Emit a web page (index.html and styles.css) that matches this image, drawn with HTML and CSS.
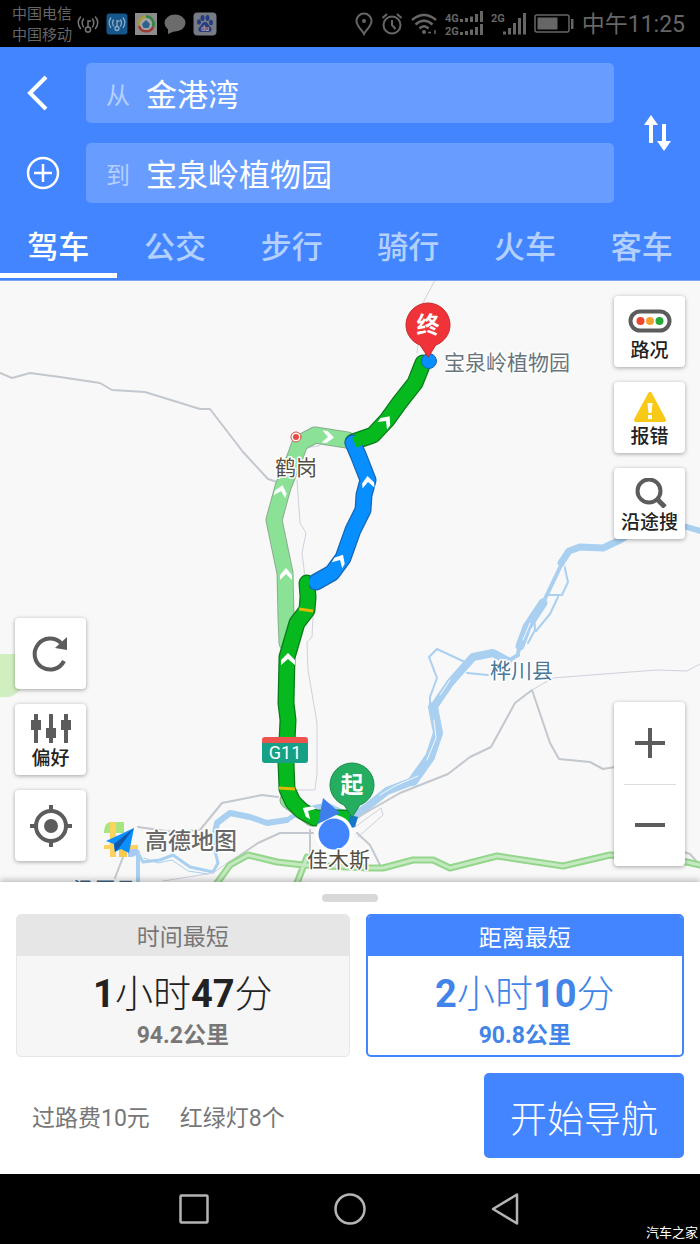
FILE: index.html
```html
<!DOCTYPE html>
<html lang="zh-CN">
<head>
<meta charset="utf-8">
<meta name="viewport" content="width=device-width, initial-scale=1">
<title>路线规划</title>
<link rel="stylesheet" href="styles.css">
</head>
<body>
<div class="status">
  <div class="carriers"><span>中国电信</span><span>中国移动</span></div>
  <div class="notices">
    <svg width="22" height="22" viewBox="0 0 22 22" fill="none" stroke="#777" stroke-width="1.5" stroke-linecap="round"><circle cx="11" cy="16.5" r="2.6"/><path d="M11 14V8h2.5M6.5 14Q4 9.5 6.5 6M15.5 14Q18 9.5 15.5 6M3.5 15.5Q-1 9.5 3.5 4M18.5 15.5Q23 9.5 18.5 4"/></svg>
    <svg width="22" height="22" viewBox="0 0 22 22" fill="none" stroke="#8cabc4" stroke-width="1.3" stroke-linecap="round"><rect x=".5" y=".5" width="21" height="21" rx="3" fill="#17568a" stroke="none"/><circle cx="11" cy="15.5" r="2"/><path d="M11 13.5V8h2M7.5 13Q5.5 9.5 7.5 7M14.5 13Q16.5 9.5 14.5 7M4.8 14.5Q1.5 9.5 4.8 5M17.2 14.5Q20.5 9.5 17.2 5"/></svg>
    <svg width="22" height="22" viewBox="0 0 22 22" fill="none" stroke-width="2.5"><path d="M0 0h22v22H0z" fill="#8c8c8c"/><circle cx="11" cy="11" r="8" fill="#a4a4a4"/><path d="M4 13A7.5 7.5 0 0 1 11 3.5" stroke="#a39a3a"/><path d="M11 3.5A7.5 7.5 0 0 1 18 14" stroke="#318246"/><path d="M18 14A7.5 7.5 0 0 1 4 13" stroke="#9b3b32"/><path d="M11 7l4 4-1.5 4h-5L7 11z" fill="#2d6388"/></svg>
    <svg width="22" height="22" viewBox="0 0 22 22"><ellipse cx="11" cy="10" rx="10.5" ry="8.5" fill="#6c6c6c"/><path d="M4 15v6l7-3z" fill="#6c6c6c"/></svg>
    <svg width="24" height="24" viewBox="0 0 24 24"><rect x=".5" y=".5" width="23" height="23" rx="4" fill="#777b84"/><g fill="#253b83"><ellipse cx="6" cy="10" rx="2" ry="2.7"/><ellipse cx="9.5" cy="6" rx="2" ry="3"/><ellipse cx="14.5" cy="6" rx="2" ry="3"/><ellipse cx="18" cy="10.5" rx="2" ry="2.7"/><path d="M12 10c3 0 3 3 5.500 5 2 2 1 5-1.500 5H8c-2.500 0-3.500-3-1.500-5C9 13 9 10 12 10z"/></g><text x="12" y="18.5" font-size="7" font-weight="700" fill="#aaa" text-anchor="middle">du</text></svg>
  </div>
  <div class="device">
    <svg width="18" height="24" viewBox="0 0 18 24" fill="none" stroke="#666" stroke-width="2"><path d="M9 22C7 18 1.500 14 1.500 9a7.500 7.500 0 0 1 15 0c0 5-5.500 9-7.500 13z"/><circle cx="9" cy="9" r="2" fill="#666" stroke="none"/></svg>
    <svg width="22" height="24" viewBox="0 0 22 24" fill="none" stroke="#666" stroke-width="2"><circle cx="11" cy="13" r="8.5"/><path d="M11 8v5l3.500 4M1.500 6L6 2M20.500 6L16 2"/></svg>
    <svg width="26" height="24" viewBox="0 0 26 24" fill="none" stroke="#666" stroke-width="2.5"><path d="M1 8Q13-2 25 8M4.500 12.500Q13 5 21.500 12.500M8.500 16.500Q13 12 17.500 16.500"/><circle cx="13" cy="20" r="2" fill="#666" stroke="none"/><path d="M17 20.500h3M24 18v4" stroke-width="1.5"/></svg>
    <svg width="38" height="26" viewBox="0 0 38 26" fill="#666"><text x="0" y="11" font-size="11" font-weight="700">4G</text><text x="0" y="24" font-size="11" font-weight="700">2G</text><path d="M15 8h3v3h-3zM20 7h3v4h-3zM25 5.500h3V11h-3zM30 3h3v8h-3zM35 0h3v11h-3zM15 21h3v3h-3zM20 20h3v4h-3zM25 18.500h3V24h-3zM30 16h3v8h-3zM35 13h3v11h-3z"/></svg>
    <svg width="35" height="26" viewBox="0 0 35 26" fill="#666"><text x="0" y="11" font-size="11" font-weight="700">2G</text><path d="M12 20.500h3v3h-3zM17 17h3v6.500h-3zM22 12h3v11.500h-3zM27 7h3v16.500h-3zM32 2h3v21.500h-3z"/></svg>
    <svg width="40" height="20" viewBox="0 0 40 20"><rect x="1" y="1" width="34" height="17" rx="2" fill="none" stroke="#666" stroke-width="1.5"/><path d="M3.500 3.500h20v12h-20zM37 5h2.500v10H37z" fill="#666"/></svg>
    <time>中午11:25</time>
  </div>
</div>

<header class="planner">
  <form class="route-form">
    <div class="side">
      <button type="button" class="icon-btn" aria-label="返回"><svg width="34" height="40" viewBox="0 0 34 40" fill="none" stroke="#fff" stroke-width="4"><path d="M20 4L4 20l16 16"/></svg></button>
      <button type="button" class="icon-btn" aria-label="添加途经点"><svg width="34" height="34" viewBox="0 0 34 34" fill="none" stroke="#fff" stroke-width="2.5"><circle cx="17" cy="17" r="15"/><path d="M8 17h18M17 8v18"/></svg></button>
    </div>
    <div class="fields">
      <div class="field"><label for="from">从</label><input id="from" type="text" value="金港湾"></div>
      <div class="field"><label for="to">到</label><input id="to" type="text" value="宝泉岭植物园"></div>
    </div>
    <button type="button" class="icon-btn" aria-label="交换起终点"><svg width="28" height="38" viewBox="0 0 28 38" fill="#fff"><path d="M8 1l7 10h-5v18H6V11H1zM21 37l-7-10h5V10h4v17h5z"/></svg></button>
  </form>
  <nav class="tabs">
    <button type="button" class="tab active">驾车</button>
    <button type="button" class="tab">公交</button>
    <button type="button" class="tab">步行</button>
    <button type="button" class="tab">骑行</button>
    <button type="button" class="tab">火车</button>
    <button type="button" class="tab">客车</button>
  </nav>
</header>

<main class="map">
  <svg class="canvas" viewBox="0 281 700 601" preserveAspectRatio="xMidYMid slice" fill="none" stroke-linejoin="round" stroke-linecap="round">
    <path d="M0 654h18q6 20 2 36-8 9-20 7z" fill="#d0efc1"/>
    <g stroke="#a9d0f0">
      <path d="M138 852v34" stroke-width="4"/>
      <path d="M138 853l5 9 17-2 13-5 17 12 23 5 5-9-5-20 4-21" stroke-width="3"/>
      <path d="M144 858l14 5 14-3 16 11 20 3" stroke-width="1"/>
      <path d="M213 843l4-20 13-10 20 4 17 6 20-3" stroke-width="6"/>
      <path d="M287 820l16-10 24-5 20 9 20-6" stroke-width="5"/>
      <path d="M355 816l12-9 20-16 26-10 17-24" stroke-width="8"/>
      <path d="M413 781l17-24 8-24-5-26" stroke-width="10"/>
      <path d="M433 708l17-25 23-26 20-4 15 8" stroke-width="8"/>
      <path d="M508 661l10-6M518 653l4-14" stroke-width="4"/>
      <path d="M520 646l7-19 16-24" stroke-width="9"/>
      <path d="M543 603l11-23 12-25" stroke-width="4"/>
      <path d="M561 563l8-12 11-4 23 1 17-8 14-9" stroke-width="7"/>
      <path d="M620 538l40-16 27 5 20 6" stroke-width="6"/>
      <path d="M430 712v-15l7-19-8-21 8-8 30 14M467 673l21 2M563 560l5 22-6 13h-15M534 612l1 18-7 13M558 597l-8 17-14 17" stroke-width="2"/>
    </g>
    <path d="M434 720l2 18-9 22M418 776l-23 10-15 9M440 695l10-15M523 640l7-17M566 562l-5 12" stroke="#f8f8f8"/>
    <g stroke="#c2c8ce" stroke-width="2">
      <path d="M0 373l12 5 18-5 30 4 40 6 12 7 33 2 55 17h10l33 43 25 27 9 3"/>
      <path d="M138 827l35 5 27-2 22-27 40-8 16 2M123 857l-8 21M233 860l25-17 22-10h33M310 830v25M353 820l47-27 48-19 22-17 21-10 24-44 17-13 18 53 9 16 31 3 13 7 12-2M357 833l13 12 10 20M681 851l9 3 8 9"/>
    </g>
    <path d="M435 280l-12 23-6 50M297 480l3 43 6 10-4 20 3 24M310 447l9-1 6-6M313 617l-1 20-5 5 1 28 9 53v50l-2 17h-25M355 827l26-19 2 7-25 22M163 881l50-8 20-14M532 690l21-12 64-5 40-3 30 1 13-7" stroke="#cfd1dc"/>
    <path d="M217 883l13-18 18-10 29 7 26 3 67 3h13l30-8h20l17 8 47-12 66 10 47-11 77 7 13 3M297 883l10-26" stroke="#94d68b" stroke-width="7"/>
    <path d="M217 883l13-18 18-10 29 7 26 3 67 3h13l30-8h20l17 8 47-12 66 10 47-11 77 7 13 3M297 883l10-26" stroke="#c5e9c1" stroke-width="3"/>

    <path d="M287 643l-1-26-1-44-11-53 9-33 12-30 5-14 15-8 32 5M288 800l24 18" stroke="#8aad8e" stroke-width="17"/>
    <path d="M287 643l-1-26-1-44-11-53 9-33 12-30 5-14 15-8 32 5M288 800l24 18" stroke="#8be297" stroke-width="15"/>
    <path d="M345 818h-30l-13-7-9-9-6-13-1-26 2-43-2-17 1-46 10-34 10-13 1-13-1-14" stroke="#087b1b" stroke-width="17"/>
    <path d="M345 818h-30l-13-7-9-9-6-13-1-26 2-43-2-17 1-46 10-34 10-13 1-13-1-14" stroke="#05b91e" stroke-width="14.5"/>
    <path d="M353 442l20-7 14-15 13-18 15-19 8-20" stroke="#087b1b" stroke-width="17"/>
    <path d="M353 442l20-7 14-15 13-18 15-19 8-20" stroke="#05b91e" stroke-width="14.5"/>
    <path d="M316 582l16-9 11-15 10-28 10-20 1-15 4-15-9-23-6-14" stroke="#1765b3" stroke-width="17"/>
    <path d="M316 582l16-9 11-15 10-28 10-20 1-15 4-15-9-23-6-14" stroke="#078eff" stroke-width="14.5"/>
    <path d="M301 583q0-6 8-7v13h-8zM352 438l7-5 10 8-12 7z" fill="#05b91e"/>
    <circle cx="429" cy="361" r="7.5" fill="#078eff" stroke="#1765b3"/>
    <path d="M299 609l14 2M279 788l16 1" stroke="#dfb900" stroke-width="3" stroke-linecap="butt"/>
    <g fill="#fff">
      <path d="M-7 6v-5l7-7 7 7v5l-7-6z" transform="translate(288 659)"/>
      <path d="M-6 6v-5l6-7 6 7v5l-6-6z" transform="translate(286 574)"/>
      <path d="M-6 6v-5l6-7 6 7v5l-6-6z" transform="translate(281 491) rotate(15)"/>
      <path d="M-6 6v-5l6-7 6 7v5l-6-6z" transform="translate(328 437) rotate(95)"/>
      <path d="M-6 6v-5l6-7 6 7v5l-6-6z" transform="translate(386 421) rotate(38)"/>
      <path d="M-6 6v-5l6-7 6 7v5l-6-6z" transform="translate(368 482) rotate(-5)"/>
      <path d="M-6 6v-5l6-7 6 7v5l-6-6z" transform="translate(340 560) rotate(30)"/>
      <path d="M-6 6v-5l6-7 6 7v5l-6-6z" transform="translate(308 811) rotate(-60)"/>
    </g>

    <circle cx="296" cy="437" r="5" fill="#fff" stroke="#e34c44"/><circle cx="296" cy="437" r="3" fill="#e34c44"/>
    <path d="M262 740q0-3 3-3h40q3 0 3 3v3h-46z" fill="#ee5350"/>
    <path d="M262 743h46v17q0 3-3 3h-40q-3 0-3-3z" fill="#16a085"/>

    <path d="M428 357l-8-12c-8-3-14-11-14-20a22 22 0 0 1 44 0c0 9-6 17-14 20z" fill="#ef3338" stroke="#c52a2c"/>
    <path d="M350 815l8 2-3 10-8 2z" fill="#1876c9"/>
    <path d="M352 817l-8-12c-8-3-14-11-14-20a22 22 0 0 1 44 0c0 9-6 17-14 20z" fill="#25ae60" stroke="#178a49"/>
    <circle cx="334" cy="834" r="19" fill="#fff"/>
    <path d="M323 798l-5 26 22-11z" fill="#3f7fec"/>
    <circle cx="334" cy="834" r="15.5" fill="#4285ff"/>

    <path d="M104 831q1-9 7-9h13v11h-20z" fill="#a6e57f"/><path d="M110 822h6v35h-6zM104 845h34v4h-34z" fill="#fdd35d"/><path d="M119 849h8v8h-8z" fill="#fbc94d"/><path d="M128 849h10q0 8-7 8h-3z" fill="#a9c8f5"/><path d="M106 841l28-13-5 25-8-4-6 3-1-8z" fill="#0b91ff"/><path d="M114 844l20-16-15 20-4 4z" fill="#0e59ab"/>

    <g class="labels">
      <text x="444" y="370" font-size="21" fill="#68757d">宝泉岭植物园</text>
      <text x="275" y="475" font-size="21" fill="#554f3f">鹤岗</text>
      <text x="490" y="678" font-size="21" fill="#497998">桦川县</text>
      <text x="307" y="867" font-size="21" fill="#554f3f">佳木斯</text>
      <text x="73" y="897" font-size="21" fill="#42688b">汤原县</text>
      <text x="145" y="849" font-size="23" font-weight="500" fill="#686868">高德地图</text>
    </g>
    <g fill="#fff" text-anchor="middle">
      <text x="285" y="759" font-size="18">G11</text>
      <text x="428" y="333" font-size="23" font-weight="700">终</text>
      <text x="352" y="793" font-size="23" font-weight="700">起</text>
    </g>
  </svg>

  <div class="tools tools-left">
    <button type="button" class="tool" aria-label="刷新"><svg width="40" height="40" viewBox="0 0 40 40" fill="none" stroke="#5c5c5c" stroke-width="4"><path d="M33 27A15.500 15.500 0 1 1 30 9"/><path d="M36 3v13l-12-2z" fill="#5c5c5c" stroke="none"/></svg></button>
    <button type="button" class="tool labelled"><svg width="40" height="30" viewBox="0 0 40 30" fill="#5c5c5c"><path d="M3 0h4v6h3v10H7v13H3V16H0V6h3zM18 0h4v14h3v10h-3v5h-4v-5h-3V14h3zM33 0h4v6h3v10h-3v13h-4V16h-3V6h3z"/></svg><span>偏好</span></button>
    <button type="button" class="tool" aria-label="定位"><svg width="42" height="42" viewBox="0 0 42 42" fill="none" stroke="#5c5c5c" stroke-width="4"><circle cx="21" cy="21" r="15"/><path d="M21 0v6M21 36v6M0 21h6M36 21h6"/><circle cx="21" cy="21" r="7" fill="#5c5c5c" stroke="none"/></svg></button>
  </div>
  <div class="tools tools-right">
    <button type="button" class="tool labelled"><svg width="44" height="30" viewBox="0 0 44 30"><rect x="2.500" y="5.500" width="39" height="19" rx="9.500" fill="#fff" stroke="#5c5c5c" stroke-width="4"/><circle cx="12.500" cy="15" r="4" fill="#ee4630"/><circle cx="22" cy="15" r="4" fill="#f3a12d"/><circle cx="31.500" cy="15" r="4" fill="#22aa38"/></svg><span>路况</span></button>
    <button type="button" class="tool labelled"><svg width="34" height="30" viewBox="0 0 34 30"><path d="M17 2l14 26H3z" fill="#f8c917" stroke="#f8c917" stroke-width="4" stroke-linejoin="round"/><path d="M14.500 11h5l-1 10h-3zM15 23h4v4h-4z" fill="#fff"/></svg><span>报错</span></button>
    <button type="button" class="tool labelled"><svg width="34" height="30" viewBox="0 0 34 30" fill="none" stroke="#5c5c5c" stroke-width="4"><circle cx="16" cy="13" r="11.500"/><path d="M23 20l9 9" stroke-width="5"/></svg><span>沿途搜</span></button>
  </div>
  <div class="zoom">
    <button type="button" aria-label="放大"><svg width="30" height="30" viewBox="0 0 30 30" stroke="#5c5c5c" stroke-width="4"><path d="M0 15h30M15 0v30"/></svg></button>
    <button type="button" aria-label="缩小"><svg width="30" height="30" viewBox="0 0 30 30" stroke="#5c5c5c" stroke-width="4"><path d="M0 15h30"/></svg></button>
  </div>
</main>

<section class="sheet">
  <div class="handle"></div>
  <div class="options">
    <button type="button" class="option"><span class="kind">时间最短</span><span class="duration"><b>1</b>小时<b>47</b>分</span><span class="distance">94.2公里</span></button>
    <button type="button" class="option selected"><span class="kind">距离最短</span><span class="duration"><b>2</b>小时<b>10</b>分</span><span class="distance">90.8公里</span></button>
  </div>
  <div class="summary">
    <span>过路费10元</span><span>红绿灯8个</span>
    <button type="button" class="start">开始导航</button>
  </div>
</section>

<footer class="system-nav">
  <button type="button" aria-label="最近任务"><svg width="36" height="36" viewBox="0 0 36 36" fill="none" stroke="#b4b4b4" stroke-width="2.5"><rect x="4.500" y="4.500" width="27" height="27" rx="1"/></svg></button>
  <button type="button" aria-label="主屏幕"><svg width="36" height="36" viewBox="0 0 36 36" fill="none" stroke="#b4b4b4" stroke-width="2.5"><circle cx="18" cy="18" r="14.500"/></svg></button>
  <button type="button" aria-label="返回上一页"><svg width="36" height="36" viewBox="0 0 36 36" fill="none" stroke="#b4b4b4" stroke-width="2.5" stroke-linejoin="round"><path d="M29 3.500v29L5 18z"/></svg></button>
  <span class="watermark">汽车之家</span>
</footer>
</body>
</html>
```

FILE: styles.css
```css
* { box-sizing: border-box; }

body {
  margin: 0;
  min-height: 100vh;
  display: flex;
  flex-direction: column;
  background: #f8f8f8;
  font-family: Roboto, "Noto Sans CJK SC", sans-serif;
  color: #222;
}

button, input {
  font: inherit;
  color: inherit;
  border: 0;
  padding: 0;
  margin: 0;
  background: none;
}

svg { display: block; flex: none; }

.status {
  display: flex;
  align-items: center;
  height: 47px;
  padding: 0 15px 0 12px;
  background: #000;
  color: #666;
}
.carriers {
  display: flex;
  flex-direction: column;
  padding-top: 2px;
  font-size: 15px;
  line-height: 21px;
}
.notices {
  display: flex;
  align-items: center;
  gap: 7px;
  margin-left: 5px;
}
.device {
  display: flex;
  align-items: center;
  gap: 8px;
  margin-left: auto;
}
.device time {
  padding-top: 3px;
  font-size: 23px;
  line-height: 28px;
}

.planner {
  background: #4285ff;
  color: #fff;
  border-bottom: 1px solid #7ba6f5;
}
.route-form {
  display: grid;
  grid-template-columns: 86px 1fr 86px;
  padding-top: 16px;
}
.side, .fields {
  display: grid;
  grid-auto-rows: 60px;
  gap: 20px;
}
.icon-btn {
  display: grid;
  place-items: center;
}
.field {
  display: flex;
  align-items: center;
  gap: 16px;
  padding: 0 20px;
  border-radius: 5px;
  background: #689dff;
}
.field label {
  font-size: 24px;
  color: #b5d0ff;
}
.field input {
  flex: 1;
  min-width: 0;
  padding-top: 6px;
  font-size: 31px;
  line-height: 44px;
}
.tabs {
  display: grid;
  grid-template-columns: repeat(6, 1fr);
  padding-bottom: 2px;
}
.tab {
  height: 75px;
  padding-top: 12px;
  border-bottom: 5px solid transparent;
  font-size: 31px;
  font-weight: 500;
  color: #b3d0ff;
}
.tab.active {
  color: #fff;
  border-color: #fff;
}

.map {
  position: relative;
  flex: 1;
  min-height: 560px;
  overflow: hidden;
  background: #f8f8f8;
}
.canvas {
  position: absolute;
  inset: 0;
  width: 100%;
  height: 100%;
}
.labels text {
  paint-order: stroke;
  stroke: #fff;
  stroke-width: 3px;
}
.tools {
  position: absolute;
  display: grid;
  gap: 15px;
}
.tools-left { left: 15px; bottom: 21px; }
.tools-right { right: 15px; top: 15px; }
.tool {
  display: flex;
  flex-direction: column;
  align-items: center;
  justify-content: center;
  width: 71px;
  height: 71px;
  border-radius: 4px;
  background: #fff;
  box-shadow: 0 1px 4px rgba(0, 0, 0, .35);
  font-size: 19px;
  font-weight: 500;
  line-height: 26px;
}
.labelled {
  justify-content: flex-start;
  gap: 2px;
  padding-top: 10px;
}
.zoom {
  position: absolute;
  right: 15px;
  bottom: 16px;
  width: 71px;
  display: grid;
  border-radius: 4px;
  background: #fff;
  box-shadow: 0 1px 4px rgba(0, 0, 0, .35);
}
.zoom button {
  display: grid;
  place-items: center;
  height: 82px;
}
.zoom button + button {
  background: linear-gradient(#ddd, #ddd) center top / 52px 1px no-repeat;
}

.sheet {
  position: relative;
  padding: 12px 16px 16px;
  background: #fff;
  box-shadow: 0 -2px 6px rgba(0, 0, 0, .25);
}
.handle {
  width: 56px;
  height: 8px;
  margin: 0 auto 12px;
  border-radius: 4px;
  background: #d8d8d8;
}
.options {
  display: grid;
  grid-template-columns: 22fr 21fr;
  gap: 16px;
}
.option {
  display: flex;
  flex-direction: column;
  height: 143px;
  border: 1px solid #e6e6e6;
  border-radius: 5px;
  overflow: hidden;
  background: #f6f6f6;
  text-align: center;
}
.kind {
  align-self: stretch;
  height: 41px;
  padding-top: 2px;
  line-height: 41px;
  font-size: 23px;
  background: #e6e6e6;
  color: #777;
}
.duration {
  align-self: stretch;
  padding-top: 14px;
  font-size: 38px;
  font-weight: 300;
  line-height: 48px;
}
.duration b { font-weight: 700; }
.distance {
  align-self: stretch;
  font-size: 23px;
  line-height: 36px;
  font-weight: 700;
  color: #777;
}
.option.selected {
  border: 2px solid #4285ff;
  background: #fff;
  color: #4285e8;
}
.selected .kind {
  height: 40px;
  background: #4285ff;
  color: #fff;
}
.selected .distance { color: inherit; }
.summary {
  display: flex;
  align-items: center;
  gap: 30px;
  margin-top: 16px;
  padding-left: 16px;
  font-size: 23px;
  color: #777;
}
.start {
  width: 200px;
  height: 85px;
  padding-top: 2px;
  margin-left: auto;
  border-radius: 5px;
  background: #4285ff;
  color: #fff;
  font-size: 37px;
  font-weight: 300;
}

.system-nav {
  position: relative;
  display: flex;
  justify-content: center;
  align-items: center;
  gap: 120px;
  height: 70px;
  background: #000;
}
.watermark {
  position: absolute;
  right: 2px;
  bottom: 1px;
  font-size: 13px;
  line-height: 20px;
  color: #fff;
}
```
